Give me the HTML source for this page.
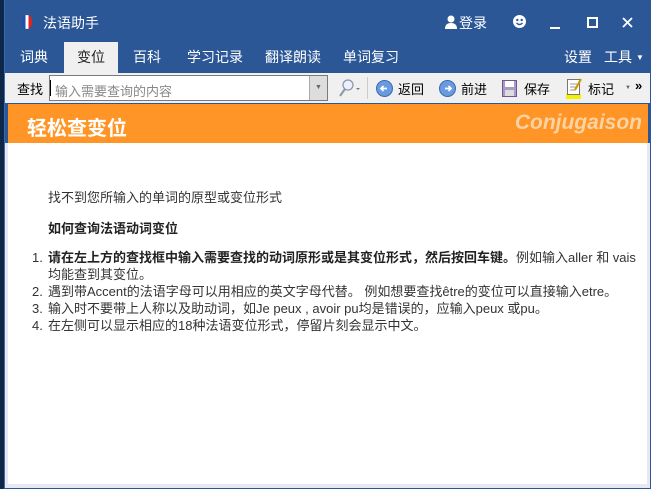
<!DOCTYPE html>
<html><head><meta charset="utf-8"><style>
*{margin:0;padding:0;box-sizing:border-box}
body{width:651px;height:489px;overflow:hidden;background:#0e2748;font-family:"Liberation Sans","Noto Sans CJK SC",sans-serif;position:relative}
.t{position:absolute;white-space:nowrap}
.tab{position:absolute;top:42px;height:31px;line-height:31px;color:#fff;font-size:14px;white-space:nowrap}
.tb{position:absolute;top:79px;font-size:13px;color:#000;white-space:nowrap}
</style></head><body>
<div class="t" style="left:4px;top:0;width:647px;height:489px;background:#2b5797;border-left:1px solid #3a6ab0"></div>
<!-- title -->
<div class="t" style="left:22px;top:15px;width:10px;height:14px;border-radius:5px;background:linear-gradient(90deg,#1f4fb0 33%,#fff 33%,#fff 66%,#d22 66%)"></div>
<div class="t" style="left:43px;top:13px;color:#fff;font-size:14px">法语助手</div>
<svg class="t" style="left:445px;top:15px" width="12" height="14"><circle cx="6" cy="4" r="3.5" fill="#fff"/><path d="M0 14 Q0 8 6 8 Q12 8 12 14Z" fill="#fff"/></svg>
<div class="t" style="left:459px;top:13px;color:#fff;font-size:14px">登录</div>
<svg class="t" style="left:513px;top:15px" width="13" height="13"><circle cx="6.5" cy="6.5" r="6.5" fill="#fff"/><circle cx="4.3" cy="5" r="1.2" fill="#2b5797"/><circle cx="8.7" cy="5" r="1.2" fill="#2b5797"/><path d="M3.5 8 Q6.5 11 9.5 8" stroke="#2b5797" stroke-width="1.3" fill="none"/></svg>
<div class="t" style="left:550px;top:27px;width:10px;height:2px;background:#fff"></div>
<div class="t" style="left:587px;top:17px;width:11px;height:11px;border:2px solid #fff"></div>
<svg class="t" style="left:622px;top:17px" width="11" height="11"><path d="M1 1L10 10M10 1L1 10" stroke="#fff" stroke-width="1.8"/></svg>
<!-- tabs -->
<div class="tab" style="left:20px">词典</div>
<div class="tab" style="left:64px;width:54px;background:#f0f0f0;color:#222;text-align:center">变位</div>
<div class="tab" style="left:133px">百科</div>
<div class="tab" style="left:187px">学习记录</div>
<div class="tab" style="left:265px">翻译朗读</div>
<div class="tab" style="left:343px">单词复习</div>
<div class="tab" style="left:564px">设置</div>
<div class="tab" style="left:604px">工具</div>
<div class="t" style="left:636px;top:53px;color:#fff;font-size:8px">▼</div>
<!-- toolbar -->
<div class="t" style="left:5px;top:73px;width:645px;height:30px;background:#f0f0f0"></div>
<div class="tb" style="left:17px">查找</div>
<div class="t" style="left:49px;top:75px;width:279px;height:26px;border:1px solid #7a7a7a;background:#fff;color:#888;padding:5px 0 0 5px;font-size:13px">输入需要查询的内容</div>
<div class="t" style="left:50px;top:80px;width:1px;height:16px;background:#000"></div>
<div class="t" style="left:309px;top:76px;width:18px;height:24px;background:#ddd;border-left:1px solid #aaa;color:#666;font-size:7px;text-align:center;line-height:24px">▼</div>
<svg class="t" style="left:336px;top:78px" width="26" height="20"><circle cx="12" cy="7" r="5" fill="#eef" stroke="#8899aa" stroke-width="1.3"/><path d="M9 11L4 18" stroke="#8899aa" stroke-width="2"/><path d="M20 10h4l-2 2z" fill="#777"/></svg>
<div class="t" style="left:367px;top:77px;width:1px;height:22px;background:#ccc"></div>
<svg class="t" style="left:376px;top:80px" width="17" height="17"><circle cx="8.5" cy="8.5" r="8" fill="#6a9ae0" stroke="#3a6ab0"/><path d="M11 8.5H5M7.5 6L5 8.5 7.5 11" stroke="#fff" stroke-width="1.8" fill="none"/></svg>
<div class="tb" style="left:398px">返回</div>
<svg class="t" style="left:439px;top:80px" width="17" height="17"><circle cx="8.5" cy="8.5" r="8" fill="#6a9ae0" stroke="#3a6ab0"/><path d="M6 8.5H12M9.5 6L12 8.5 9.5 11" stroke="#fff" stroke-width="1.8" fill="none"/></svg>
<div class="tb" style="left:461px">前进</div>
<svg class="t" style="left:502px;top:80px" width="15" height="17"><rect x="0.5" y="0.5" width="14" height="16" fill="#a99ac8" stroke="#6a5a90"/><rect x="3" y="1" width="9" height="6" fill="#fff"/><rect x="3" y="10" width="9" height="6" fill="#ddd"/></svg>
<div class="tb" style="left:524px">保存</div>
<svg class="t" style="left:566px;top:78px" width="17" height="21"><rect x="0" y="16" width="15" height="5" fill="#f5f000"/><rect x="1.5" y="1.5" width="12" height="15" fill="#fff" stroke="#777"/><path d="M4 6h7M4 9h7M4 12h5" stroke="#999"/><path d="M15 1L9 12" stroke="#c90" stroke-width="2"/></svg>
<div class="tb" style="left:588px">标记</div>
<div class="t" style="left:625px;top:85px;font-size:6px;color:#666">▼</div>
<div class="t" style="left:635px;top:78px;font-size:13px;font-weight:bold">»</div>
<!-- banner -->
<div class="t" style="left:8px;top:104px;width:640px;height:39px;background:#fe9526"></div>
<div class="t" style="left:27px;top:112px;color:#fff;font-size:20px;font-weight:bold">轻松查变位</div>
<div class="t" style="right:9px;top:111px;color:#fdd3a3;font-size:21px;font-weight:bold;font-style:italic">Conjugaison</div>
<!-- body -->
<div class="t" style="left:5px;top:143px;width:645px;height:345px;background:#fff;border-left:3px solid #e8e8ee;border-right:3px solid #e8e8ee;border-bottom:4px solid #e8e8ee;font-size:13px;color:#333">
 <div class="t" style="left:40px;top:44px">找不到您所输入的单词的原型或变位形式</div>
 <div class="t" style="left:40px;top:75px;font-weight:bold;color:#222">如何查询法语动词变位</div>
 <div class="t" style="left:24px;top:104px"><span style="display:inline-block;width:16px">1.</span><b style="color:#222">请在左上方的查找框中输入需要查找的动词原形或是其变位形式，然后按回车键。</b>例如输入aller 和 vais</div>
 <div class="t" style="left:40px;top:121px">均能查到其变位。</div>
 <div class="t" style="left:24px;top:138px"><span style="display:inline-block;width:16px">2.</span>遇到带Accent的法语字母可以用相应的英文字母代替。 例如想要查找être的变位可以直接输入etre。</div>
 <div class="t" style="left:24px;top:155px"><span style="display:inline-block;width:16px">3.</span>输入时不要带上人称以及助动词，如Je peux , avoir pu均是错误的，应输入peux 或pu。</div>
 <div class="t" style="left:24px;top:172px"><span style="display:inline-block;width:16px">4.</span>在左侧可以显示相应的18种法语变位形式，停留片刻会显示中文。</div>
</div>
</body></html>
